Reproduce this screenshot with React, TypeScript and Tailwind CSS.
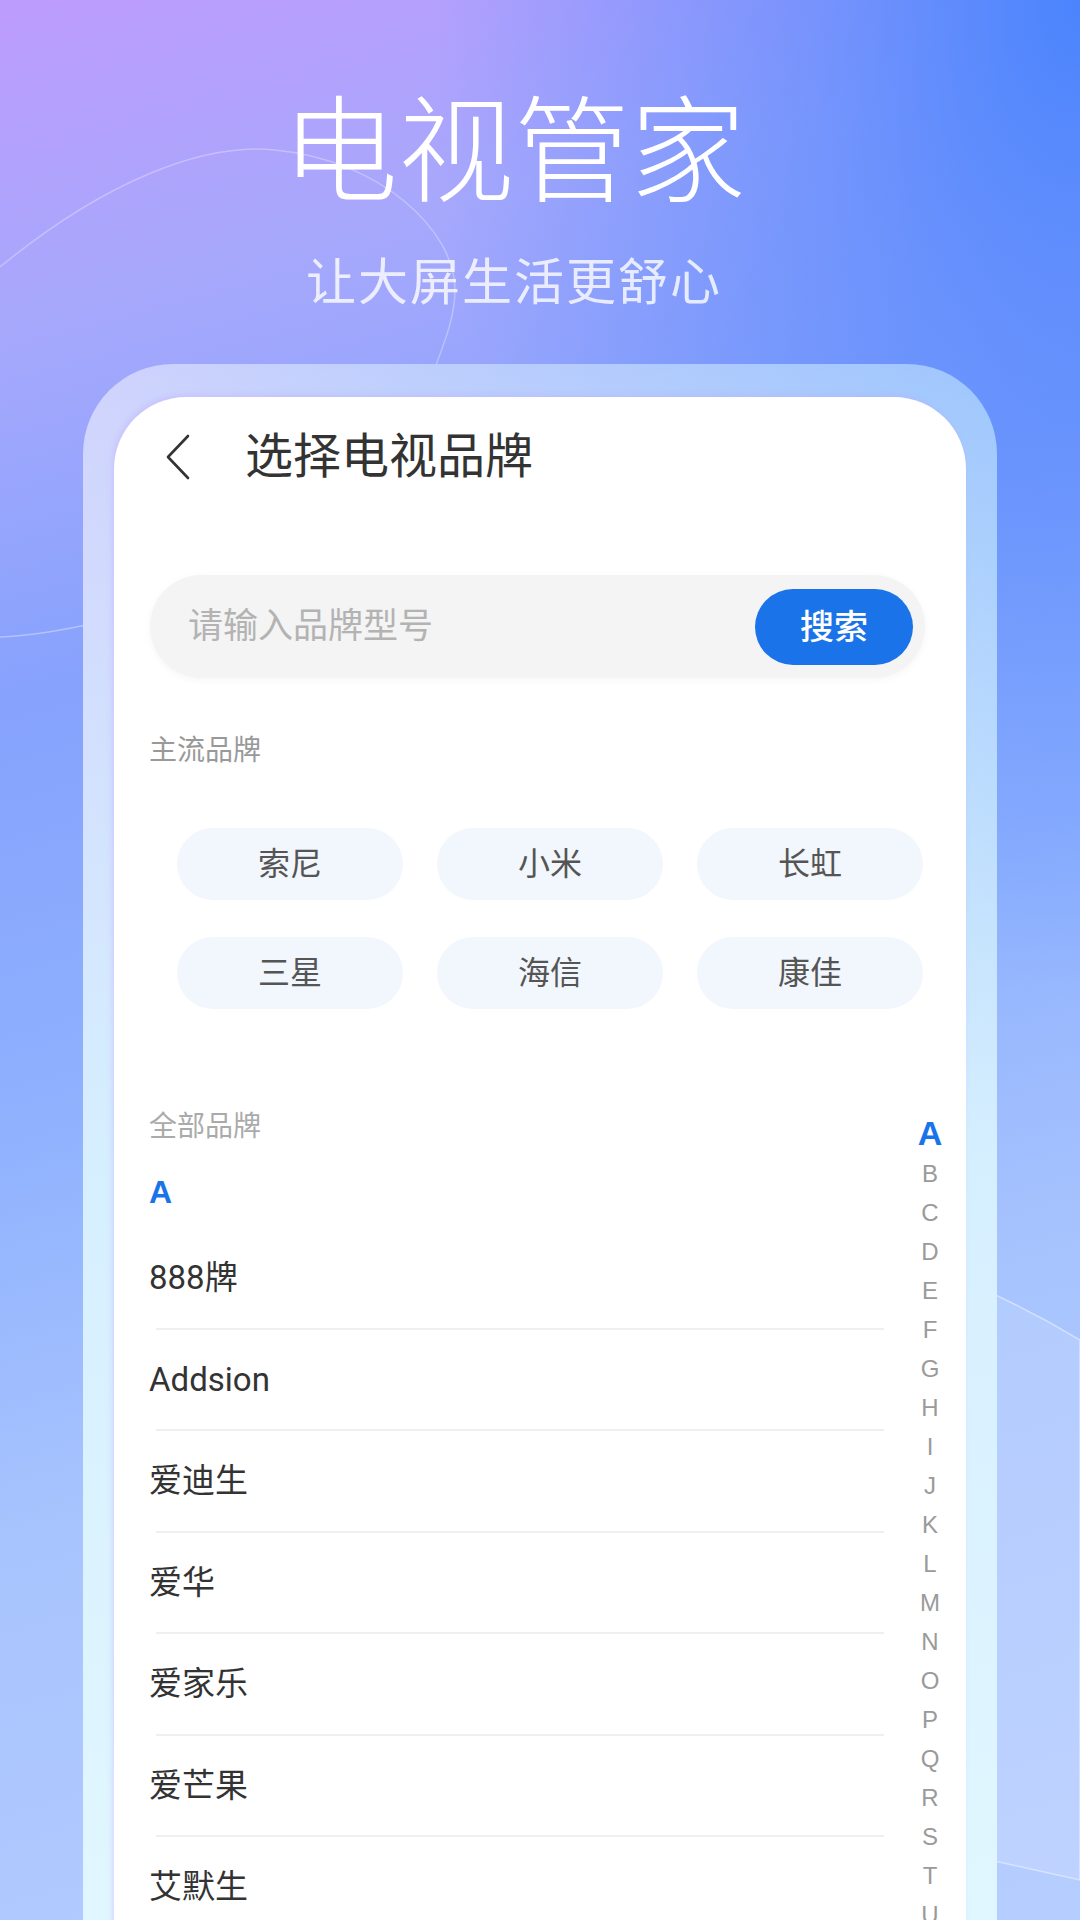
import React from 'react';

const hotBrands = ['索尼', '小米', '长虹', '三星', '海信', '康佳'];
const brandsA = ['888牌', 'Addsion', '爱迪生', '爱华', '爱家乐', '爱芒果', '艾默生'];
const letters = 'ABCDEFGHIJKLMNOPQRSTUVWXYZ'.split('');

export default function App() {
  return (
    <div className="relative w-[1080px] h-[1920px] overflow-hidden flex flex-col font-['Roboto','Noto_Sans_CJK_SC',sans-serif] bg-[radial-gradient(ellipse_650px_1000px_at_100%_0%,#4a84fd_0%,rgba(74,132,253,0.55)_40%,rgba(74,132,253,0)_100%),linear-gradient(165deg,#bd9cfd_0%,#a6a8fc_15%,#86a2fd_32%,#8eb0fe_50%,#a8c4fe_70%,#b6cdff_100%)]">
      {/* 背景装饰线 */}
      <svg className="absolute inset-0 w-full h-full pointer-events-none" viewBox="0 0 1080 1920" fill="none">
        <path
          d="M0 267 C100 185 200 142 275 150 C380 160 455 230 455 290 C455 322 440 352 427 390"
          stroke="rgba(255,255,255,0.3)"
          strokeWidth="1.5"
        />
        <path d="M0 637 C30 636 60 631 100 622" stroke="rgba(255,255,255,0.35)" strokeWidth="1.5" />
        <path
          d="M900 1255 Q1000 1292 1080 1340 L1080 1880 Q1000 1862 900 1840 Z"
          fill="rgba(255,255,255,0.12)"
          stroke="rgba(255,255,255,0.45)"
          strokeWidth="1.5"
        />
      </svg>

      {/* 标题 */}
      <div className="relative flex flex-col items-center pr-[52px] pt-[95px]">
        <h1 className="text-[116px] leading-none font-light text-white">电视管家</h1>
        <p className="mt-[47px] text-[50px] leading-none tracking-[2px] text-white/80">让大屏生活更舒心</p>
      </div>

      {/* 手机框 */}
      <div className="relative mt-[56px] mx-[83px] flex-1 flex flex-col rounded-t-[90px] px-[31px] pt-[33px] bg-[linear-gradient(180deg,rgba(222,244,255,0)_0%,#d6efff_45%,#e4f9ff_100%),linear-gradient(90deg,#d0d3fd_0%,#9ec6fd_100%)]">
        <div className="flex-1 flex flex-col rounded-t-[72px] bg-white shadow-[-2px_-2px_5px_rgba(190,165,255,0.35)]">
          {/* 顶部导航 */}
          <div className="flex items-center pt-[36px] pl-[52px]">
            <svg className="w-[24px] h-[46px]" viewBox="0 0 24 46" fill="none">
              <polyline points="22,2 2,23 22,44" stroke="#333" strokeWidth="2.6" strokeLinecap="round" strokeLinejoin="round" />
            </svg>
            <span className="ml-[55px] text-[48px] leading-none text-[#333]">选择电视品牌</span>
          </div>

          {/* 搜索 */}
          <div className="mt-[94px] ml-[36px] w-[775px] h-[103px] rounded-full bg-[#f4f4f4] shadow-[0_2px_8px_rgba(0,0,0,0.04)] flex items-center justify-between pl-[38px] pr-[12px]">
            <span className="text-[35px] leading-none text-[#b3b3b3]">请输入品牌型号</span>
            <button className="w-[158px] h-[76px] rounded-full bg-[#1a73e8] text-white text-[34px] font-medium leading-none">
              搜索
            </button>
          </div>

          {/* 主流品牌 */}
          <div className="mt-[59px] ml-[35px] text-[28px] leading-none text-[#999]">主流品牌</div>
          <div className="mt-[63px] ml-[63px] grid grid-cols-[226px_226px_226px] gap-x-[34px] gap-y-[37px]">
            {hotBrands.map(b => (
              <div key={b} className="h-[72px] rounded-full bg-[#f2f6fd] flex items-center justify-center text-[32px] text-[#555]">
                {b}
              </div>
            ))}
          </div>

          {/* 全部品牌 */}
          <div className="mt-[103px] flex">
            <div className="flex-1 pl-[35px]">
              <div className="mt-px text-[28px] leading-none text-[#aaa]">全部品牌</div>
              <div className="mt-[35px] text-[32px] leading-none font-bold text-[#1a73e8] font-['Liberation_Sans',sans-serif]">A</div>
              <div className="mt-[20px]">
                {brandsA.map(b => (
                  <div key={b}>
                    <div className="h-[99.5px] flex items-center text-[33px] text-[#333]">{b}</div>
                    <div className="ml-[7px] w-[728px] h-[2px] bg-[#efefef]" />
                  </div>
                ))}
              </div>
            </div>

            {/* 字母索引 */}
            <div className="w-[72px] flex flex-col items-center font-['Liberation_Sans',sans-serif]">
              {letters.map((l, i) => (
                <div
                  key={l}
                  className={
                    i === 0
                      ? 'h-[42px] flex items-center text-[34px] font-bold text-[#1a73e8]'
                      : 'h-[39px] flex items-center text-[24px] text-[#9a9a9a]'
                  }
                >
                  {l}
                </div>
              ))}
            </div>
          </div>
        </div>
      </div>
    </div>
  );
}
